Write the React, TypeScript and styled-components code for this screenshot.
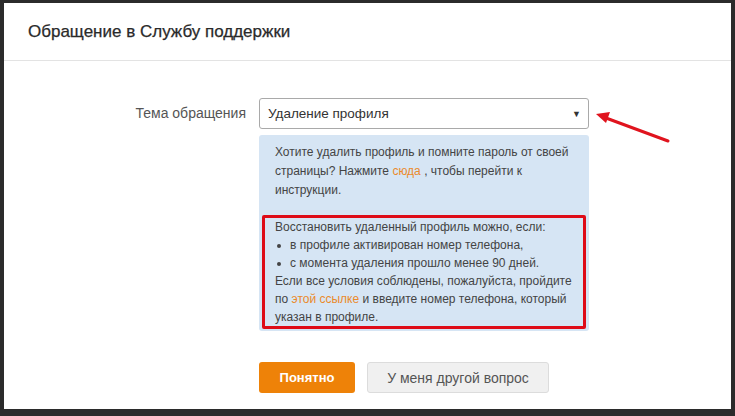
import { FC } from "react";
import styled, { createGlobalStyle } from "styled-components";

const GlobalStyle = createGlobalStyle`
  html, body {
    margin: 0;
    padding: 0;
    background: #2b2b2b;
  }
  body {
    font-family: "Liberation Sans", Arial, sans-serif;
    color: #333;
  }
`;

const App: FC = () => {
  return (
    <>
      <GlobalStyle />
      <Page>
        <Modal>
          <Header>
            <Title>Обращение в Службу поддержки</Title>
          </Header>
          <Body>
            <FormRow>
              <Label>Тема обращения</Label>
              <Field>
                <Select>
                  <span>Удаление профиля</span>
                  <Caret>▼</Caret>
                </Select>
                <InfoBox>
                  <Paragraph>
                    Хотите удалить профиль и помните пароль от своей страницы?
                    Нажмите <Link>сюда</Link> , чтобы перейти к инструкции.
                  </Paragraph>
                  <Highlight>
                    <Paragraph>Восстановить удаленный профиль можно, если:</Paragraph>
                    <List>
                      <Item>в профиле активирован номер телефона,</Item>
                      <Item>с момента удаления прошло менее 90 дней.</Item>
                    </List>
                    <Paragraph>
                      Если все условия соблюдены, пожалуйста, пройдите по{" "}
                      <Link>этой ссылке</Link> и введите номер телефона, который
                      указан в профиле.
                    </Paragraph>
                  </Highlight>
                </InfoBox>
              </Field>
            </FormRow>
            <Buttons>
              <PrimaryButton>Понятно</PrimaryButton>
              <SecondaryButton>У меня другой вопрос</SecondaryButton>
            </Buttons>
          </Body>
          <Arrow width="80" height="36" viewBox="0 0 80 36">
            <line x1="74" y1="32" x2="12" y2="9" stroke="#e0141e" strokeWidth="3" strokeLinecap="round" />
            <polygon points="2,5 16,3 12,14" fill="#e0141e" />
          </Arrow>
        </Modal>
      </Page>
    </>
  );
};

export default App;

const Page = styled.div`
  width: 735px;
  height: 416px;
  padding: 3px 4px 0 4px;
  box-sizing: border-box;
  overflow: hidden;
`;

const Modal = styled.div`
  position: relative;
  background: #fff;
  height: 406px;
  display: flex;
  flex-direction: column;
`;

const Header = styled.div`
  height: 58px;
  border-bottom: 1px solid #e3e3e3;
  display: flex;
  align-items: center;
  padding-left: 24px;
  box-sizing: border-box;
`;

const Title = styled.div`
  font-size: 17px;
  font-weight: 400;
  color: #2a2a2a;
  -webkit-text-stroke: 0.25px #2a2a2a;
`;

const Body = styled.div`
  padding-top: 37px;
  display: flex;
  flex-direction: column;
`;

const FormRow = styled.div`
  display: flex;
  align-items: flex-start;
`;

const Label = styled.div`
  width: 242px;
  text-align: right;
  padding-right: 13px;
  font-size: 14px;
  color: #555;
  line-height: 31px;
`;

const Field = styled.div`
  width: 330px;
  display: flex;
  flex-direction: column;
  gap: 6px;
`;

const Select = styled.div`
  height: 31px;
  box-sizing: border-box;
  border: 1px solid #a9a9a9;
  border-radius: 3px;
  display: flex;
  align-items: center;
  justify-content: space-between;
  padding: 0 7px 0 8px;
  font-size: 13.5px;
  color: #333;
`;

const Caret = styled.span`
  font-size: 9px;
  color: #333;
`;

const InfoBox = styled.div`
  background: #d6e5f4;
  border-radius: 3px;
  padding: 8px 16px 2px;
  font-size: 12px;
  color: #444;
`;

const Paragraph = styled.p`
  margin: 0;
  line-height: 19px;
`;

const Link = styled.span`
  color: #eb8a2a;
`;

const Highlight = styled.div`
  margin: 15px -13px 0;
  border: 3px solid #de0b17;
  border-radius: 2px;
  padding: 0 10px;

  ${Paragraph} {
    line-height: 18px;
  }
`;

const List = styled.ul`
  list-style: none;
  margin: 0;
  padding: 0;
`;

const Item = styled.li`
  position: relative;
  padding-left: 15px;
  line-height: 18px;

  &::before {
    content: "";
    position: absolute;
    left: 2px;
    top: 8px;
    width: 4px;
    height: 4px;
    border-radius: 50%;
    background: #444;
  }
`;

const Buttons = styled.div`
  display: flex;
  gap: 12px;
  padding-left: 255px;
  margin-top: 31px;
`;

const PrimaryButton = styled.button`
  height: 31px;
  width: 96px;
  border: none;
  border-radius: 3px;
  background: #ee8208;
  color: #fff;
  font-family: inherit;
  font-size: 13px;
  font-weight: 700;
`;

const SecondaryButton = styled.button`
  height: 31px;
  width: 182px;
  border: 1px solid #dcdcdc;
  border-radius: 3px;
  background: #f0f0f0;
  color: #555;
  font-family: inherit;
  font-size: 14px;
`;

const Arrow = styled.svg`
  position: absolute;
  left: 590px;
  top: 106px;
`;
